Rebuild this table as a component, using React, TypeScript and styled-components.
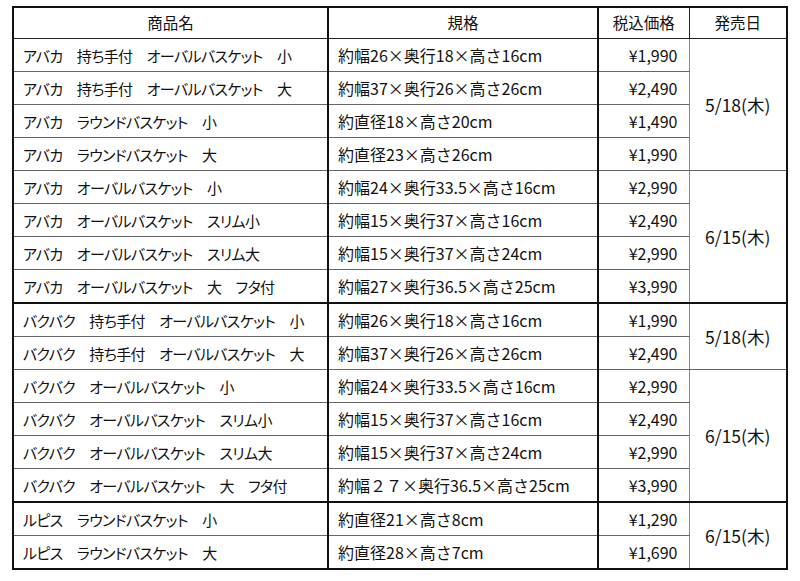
import React from 'react';
import styled, { createGlobalStyle } from 'styled-components';

const GlobalStyle = createGlobalStyle`
  html, body {
    margin: 0;
    padding: 0;
    background: #ffffff;
  }
  body {
    font-family: "Noto Sans CJK JP", "Noto Sans", sans-serif;
    color: #111;
  }
`;

const Page = styled.div`
  padding: 6px 0 0 12px;
`;

const Table = styled.table`
  width: 774px;
  border-collapse: collapse;
  border: 2px solid #111;
  table-layout: fixed;
  font-size: 16px;
  line-height: 1;
`;

const HeadCell = styled.th<{ $gray?: boolean }>`
  height: 30px;
  padding: 0;
  font-weight: 400;
  font-size: 15.5px;
  text-align: center;
  border: 1px solid #222;
  border-left: ${({ $gray }) => ($gray ? '1px solid #888' : '2px solid #111')};
`;

const Cell = styled.td<{ $align?: 'left' | 'right' | 'center'; $thick?: boolean; $line?: 'dark' | 'gray' }>`
  height: 32px;
  padding: 0 11px 0 10px;
  text-align: ${({ $align }) => $align ?? 'left'};
  border-top: ${({ $thick }) => ($thick ? '2px solid #111' : '1px solid #666')};
  border-bottom: 1px solid #666;
  border-left: ${({ $line }) => ($line === 'gray' ? '1px solid #888' : '2px solid #111')};
  white-space: nowrap;
`;

const NameCell = styled(Cell)`
  padding-left: 9px;
  font-size: 15px;
  font-feature-settings: "palt";
  letter-spacing: -0.65px;
`;

const SpecCell = styled(Cell)`
  padding-left: 9px;
`;

const DateCell = styled(Cell)`
  padding: 0;
  font-size: 17.5px;
  text-align: center;
`;

type Row = { name: string; spec: string; price: string };

type Group = { date: string; thick: boolean; rows: Row[] };

const groups: Group[] = [
  {
    date: '5/18(木)',
    thick: false,
    rows: [
      { name: 'アバカ　持ち手付　オーバルバスケット　小', spec: '約幅26×奥行18×高さ16cm', price: '¥1,990' },
      { name: 'アバカ　持ち手付　オーバルバスケット　大', spec: '約幅37×奥行26×高さ26cm', price: '¥2,490' },
      { name: 'アバカ　ラウンドバスケット　小', spec: '約直径18×高さ20cm', price: '¥1,490' },
      { name: 'アバカ　ラウンドバスケット　大', spec: '約直径23×高さ26cm', price: '¥1,990' },
    ],
  },
  {
    date: '6/15(木)',
    thick: false,
    rows: [
      { name: 'アバカ　オーバルバスケット　小', spec: '約幅24×奥行33.5×高さ16cm', price: '¥2,990' },
      { name: 'アバカ　オーバルバスケット　スリム小', spec: '約幅15×奥行37×高さ16cm', price: '¥2,490' },
      { name: 'アバカ　オーバルバスケット　スリム大', spec: '約幅15×奥行37×高さ24cm', price: '¥2,990' },
      { name: 'アバカ　オーバルバスケット　大　フタ付', spec: '約幅27×奥行36.5×高さ25cm', price: '¥3,990' },
    ],
  },
  {
    date: '5/18(木)',
    thick: true,
    rows: [
      { name: 'バクバク　持ち手付　オーバルバスケット　小', spec: '約幅26×奥行18×高さ16cm', price: '¥1,990' },
      { name: 'バクバク　持ち手付　オーバルバスケット　大', spec: '約幅37×奥行26×高さ26cm', price: '¥2,490' },
    ],
  },
  {
    date: '6/15(木)',
    thick: false,
    rows: [
      { name: 'バクバク　オーバルバスケット　小', spec: '約幅24×奥行33.5×高さ16cm', price: '¥2,990' },
      { name: 'バクバク　オーバルバスケット　スリム小', spec: '約幅15×奥行37×高さ16cm', price: '¥2,490' },
      { name: 'バクバク　オーバルバスケット　スリム大', spec: '約幅15×奥行37×高さ24cm', price: '¥2,990' },
      { name: 'バクバク　オーバルバスケット　大　フタ付', spec: '約幅２７×奥行36.5×高さ25cm', price: '¥3,990' },
    ],
  },
  {
    date: '6/15(木)',
    thick: true,
    rows: [
      { name: 'ルピス　ラウンドバスケット　小', spec: '約直径21×高さ8cm', price: '¥1,290' },
      { name: 'ルピス　ラウンドバスケット　大', spec: '約直径28×高さ7cm', price: '¥1,690' },
    ],
  },
];

export default function App() {
  return (
    <Page>
      <GlobalStyle />
      <Table>
        <colgroup>
          <col style={{ width: 315 }} />
          <col style={{ width: 270 }} />
          <col style={{ width: 91 }} />
          <col style={{ width: 98 }} />
        </colgroup>
        <thead>
          <tr>
            <HeadCell>商品名</HeadCell>
            <HeadCell>規格</HeadCell>
            <HeadCell>税込価格</HeadCell>
            <HeadCell $gray>発売日</HeadCell>
          </tr>
        </thead>
        <tbody>
          {groups.map((g, gi) =>
            g.rows.map((r, ri) => {
              const thick = g.thick && ri === 0;
              return (
                <tr key={`${gi}-${ri}`}>
                  <NameCell $thick={thick}>{r.name}</NameCell>
                  <SpecCell $thick={thick}>{r.spec}</SpecCell>
                  <Cell $thick={thick} $align="right">{r.price}</Cell>
                  {ri === 0 && (
                    <DateCell rowSpan={g.rows.length} $thick={g.thick} $line="gray">
                      {g.date}
                    </DateCell>
                  )}
                </tr>
              );
            })
          )}
        </tbody>
      </Table>
    </Page>
  );
}
